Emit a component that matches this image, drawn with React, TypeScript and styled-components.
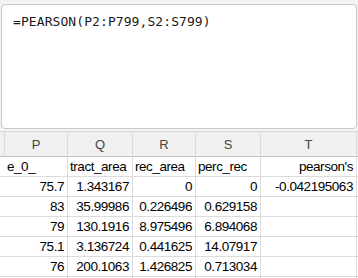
import React from "react"
import styled, { createGlobalStyle } from "styled-components"

const GlobalStyle = createGlobalStyle`
  html, body {
    margin: 0;
    padding: 0;
    background: #f3f3f3;
    overflow: hidden;
  }
  #root {
    width: 358px;
    height: 278px;
    overflow: hidden;
  }
`

const Page = styled.div`
  display: flex;
  flex-direction: column;
  width: 358px;
  height: 278px;
  overflow: hidden;
`

const FormulaArea = styled.div`
  padding: 4px 1px 2px 1px;
`

const FormulaBox = styled.div`
  box-sizing: border-box;
  height: 125px;
  background: #ffffff;
  border: 1px solid #c8c8c8;
  border-radius: 4px;
  padding: 9px 0 0 11px;
  font-family: "DejaVu Sans Mono", "Liberation Mono", monospace;
  font-size: 13px;
  line-height: 16px;
  color: #1a1a1a;
  letter-spacing: 0.08px;
`

const Sheet = styled.div`
  display: grid;
  grid-template-columns: 5px 63px 65px 63px 65px 96px 1fr;
  background: #ffffff;
  font-family: "Liberation Sans", Arial, sans-serif;
  font-size: 13.5px;
  letter-spacing: -0.45px;
  color: #000000;
`

const ColHead = styled.div`
  box-sizing: border-box;
  height: 26px;
  background: #f0f0f0;
  border-top: 1px solid #d6d6d6;
  border-bottom: 1px solid #c4c4c4;
  border-right: 1px solid #dadada;
  display: flex;
  align-items: center;
  justify-content: center;
  font-family: "Liberation Sans", Arial, sans-serif;
  font-size: 13px;
  letter-spacing: 0;
  color: #444444;
  padding-top: 1px;
`

const Cell = styled.div<{ $right?: boolean }>`
  box-sizing: border-box;
  height: 20px;
  border-right: 1px solid #dcdcdc;
  border-bottom: 1px solid #dcdcdc;
  display: flex;
  align-items: center;
  justify-content: ${(p) => (p.$right ? "flex-end" : "flex-start")};
  padding: 1px 3px 0 2px;
  white-space: nowrap;
  overflow: visible;
  line-height: 1;
`

const RowStub = styled(Cell)`
  border-right: none;
  padding: 0;
`

const columns = ["", "P", "Q", "R", "S", "T", ""]

const rows: string[][] = [
  ["e_0_", "tract_area", "rec_area", "perc_rec", "pearson's"],
  ["75.7", "1.343167", "0", "0", "-0.042195063"],
  ["83", "35.99986", "0.226496", "0.629158", ""],
  ["79", "130.1916", "8.975496", "6.894068", ""],
  ["75.1", "3.136724", "0.441625", "14.07917", ""],
  ["76", "200.1063", "1.426825", "0.713034", ""],
  ["", "", "", "", ""],
]

export default function App() {
  return (
    <>
      <GlobalStyle />
      <Page>
        <FormulaArea>
          <FormulaBox>=PEARSON(P2:P799,S2:S799)</FormulaBox>
        </FormulaArea>
        <Sheet>
          {columns.map((c, i) => (
            <ColHead key={"h" + i}>{c}</ColHead>
          ))}
          {rows.map((row, r) => (
            <React.Fragment key={r}>
              <RowStub />
              {row.map((v, c) => (
                <Cell key={c} $right={r > 0 || c === 4}>
                  {v}
                </Cell>
              ))}
              <Cell />
            </React.Fragment>
          ))}
        </Sheet>
      </Page>
    </>
  )
}
